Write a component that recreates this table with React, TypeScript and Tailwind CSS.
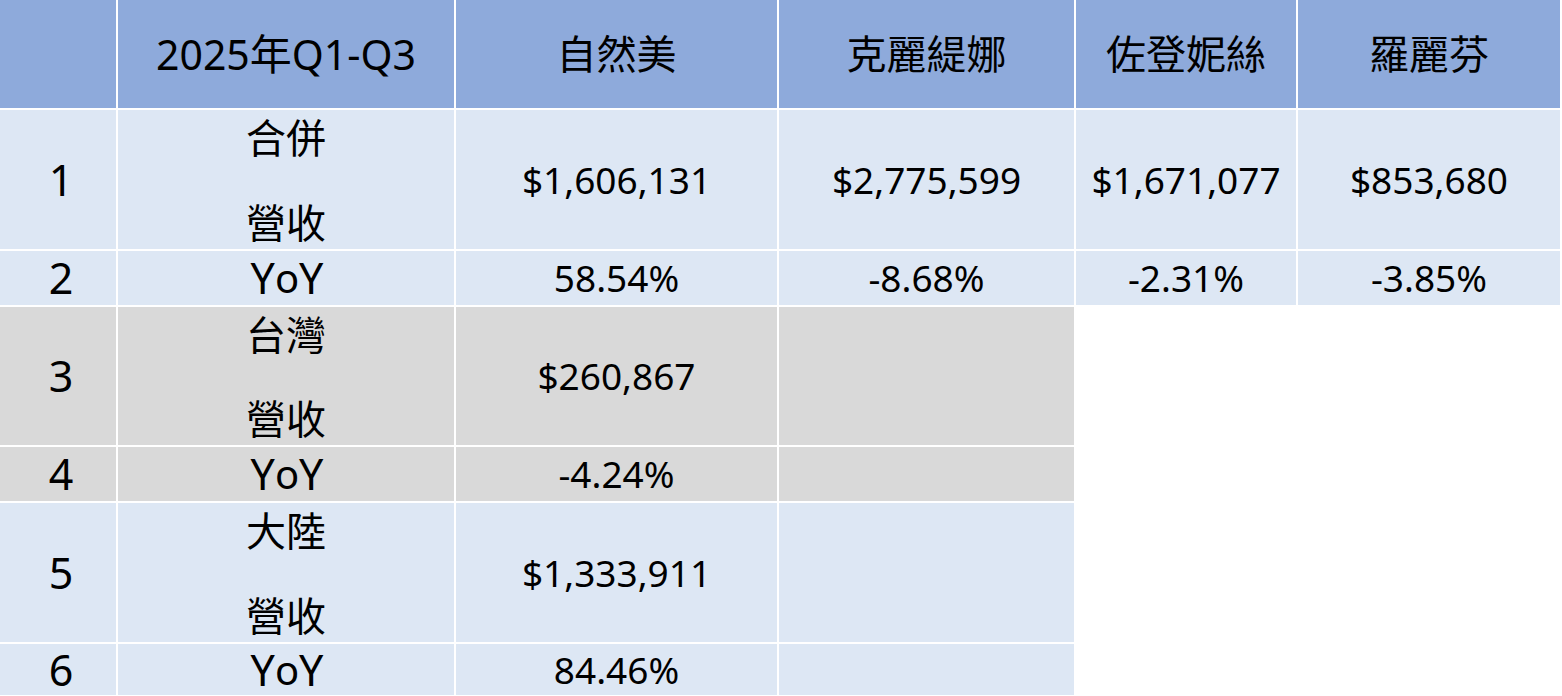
import React from "react";

const HEAD = "bg-[#8eaadb]";
const BLUE = "bg-[#dde7f4]";
const GRAY = "bg-[#d9d9d9]";

function C({ bg, children, cls = "" }: { bg: string; children?: React.ReactNode; cls?: string }) {
  return (
    <div className={`${bg} flex items-center justify-center text-black text-[37px] leading-[48px] ${cls}`}>
      {children}
    </div>
  );
}

function Cjk({ children }: { children: React.ReactNode }) {
  return <span className="text-[40px]">{children}</span>;
}

function Num({ bg, children }: { bg: string; children: React.ReactNode }) {
  return (
    <div className={`${bg} flex items-center justify-center pl-[6px] text-black text-[43px] leading-[48px]`}>
      {children}
    </div>
  );
}

function Yoy({ bg }: { bg: string }) {
  return (
    <div className={`${bg} flex items-center justify-center pl-[2px] text-black text-[43px] leading-[48px]`}>
      <span>Y</span>
      <span className="text-[40px]">o</span>
      <span>Y</span>
    </div>
  );
}

function TwoLine({ bg, top, bottom }: { bg: string; top: string; bottom: string }) {
  return (
    <div className={`${bg} flex flex-col items-center justify-between pt-1 pb-[2px] text-black text-[40px] leading-[48px]`}>
      <span>{top}</span>
      <span>{bottom}</span>
    </div>
  );
}

function Empty() {
  return <div className="bg-white" />;
}

export default function App() {
  return (
    <div
      className="w-[1562px] h-[696px] bg-white overflow-hidden"
      style={{ fontFamily: '"Noto Sans", "Noto Sans CJK TC", sans-serif' }}
    >
      <div className="grid grid-cols-[116px_336px_321px_295px_220px_262px] grid-rows-[108px_139px_54px_138px_54px_139px_51px] gap-[2px] bg-white w-[1560px]">
        {/* header */}
        <C bg={HEAD} />
        <C bg={HEAD} cls="text-[41px]">
          <span>2025</span>
          <span className="text-[42px]">年</span>
          <span>Q1-Q3</span>
        </C>
        <C bg={HEAD}><Cjk>自然美</Cjk></C>
        <C bg={HEAD}><Cjk>克麗緹娜</Cjk></C>
        <C bg={HEAD}><Cjk>佐登妮絲</Cjk></C>
        <C bg={HEAD}><Cjk>羅麗芬</Cjk></C>

        {/* row 1 */}
        <Num bg={BLUE}>1</Num>
        <TwoLine bg={BLUE} top="合併" bottom="營收" />
        <C bg={BLUE}>$1,606,131</C>
        <C bg={BLUE}>$2,775,599</C>
        <C bg={BLUE}>$1,671,077</C>
        <C bg={BLUE}>$853,680</C>

        {/* row 2 */}
        <Num bg={BLUE}>2</Num>
        <Yoy bg={BLUE} />
        <C bg={BLUE}>58.54%</C>
        <C bg={BLUE}>-8.68%</C>
        <C bg={BLUE}>-2.31%</C>
        <C bg={BLUE}>-3.85%</C>

        {/* row 3 */}
        <Num bg={GRAY}>3</Num>
        <TwoLine bg={GRAY} top="台灣" bottom="營收" />
        <C bg={GRAY}>$260,867</C>
        <C bg={GRAY} />
        <Empty />
        <Empty />

        {/* row 4 */}
        <Num bg={GRAY}>4</Num>
        <Yoy bg={GRAY} />
        <C bg={GRAY}>-4.24%</C>
        <C bg={GRAY} />
        <Empty />
        <Empty />

        {/* row 5 */}
        <Num bg={BLUE}>5</Num>
        <TwoLine bg={BLUE} top="大陸" bottom="營收" />
        <C bg={BLUE}>$1,333,911</C>
        <C bg={BLUE} />
        <Empty />
        <Empty />

        {/* row 6 */}
        <Num bg={BLUE}>6</Num>
        <Yoy bg={BLUE} />
        <C bg={BLUE}>84.46%</C>
        <C bg={BLUE} />
        <Empty />
        <Empty />
      </div>
    </div>
  );
}
